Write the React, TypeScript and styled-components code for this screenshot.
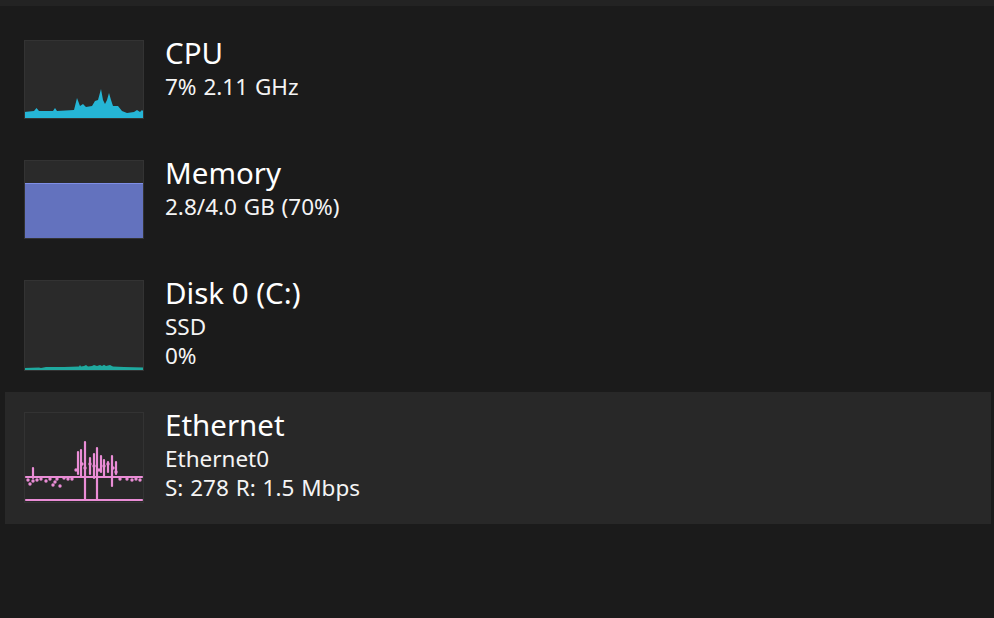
import React from 'react'
import styled, {createGlobalStyle} from 'styled-components'

const GlobalStyle = createGlobalStyle`
  html, body {
    margin: 0;
    padding: 0;
    background: #1b1b1b;
  }
  body {
    font-family: "Noto Sans", "Open Sans", sans-serif;
    color: #ffffff;
  }
`

type Kind = 'cpu' | 'memory' | 'disk' | 'ethernet'

type Resource = {
  name: string
  lines: string[]
  kind: Kind
  chartHeight: number
  selected?: boolean
}

const resources: Resource[] = [
  {name: 'CPU', lines: ['7% 2.11 GHz'], kind: 'cpu', chartHeight: 79},
  {name: 'Memory', lines: ['2.8/4.0 GB (70%)'], kind: 'memory', chartHeight: 79},
  {name: 'Disk 0 (C:)', lines: ['SSD', '0%'], kind: 'disk', chartHeight: 91},
  {
    name: 'Ethernet',
    lines: ['Ethernet0', 'S: 278 R: 1.5 Mbps'],
    kind: 'ethernet',
    chartHeight: 91,
    selected: true,
  },
]

const cpuPoints =
  '0,72 10,71 12.5,68 15,71 29,71 31,68 33,71 50,70 53,58 56,66 59,64 62,67 68,66 71,61 74,60 77,49 79,60 81,64 83,60 85,53 87,60 89,66 94,66 98,71 103,73 110,72 113,70 116,72 118,70 120,72 120,79 0,79'

const diskPoints =
  '0,88 15,87.5 17,88 22,87 40,87 55,86.5 56,85 57,86.5 60,86 62,85 64,86.5 68,86 70,85 73,86 76,85 78,86 80,84.8 82,86 86,85 89,86.5 100,87 120,87.5 120,91 0,91'

// spikes of the network trace: x, top, bottom
const netSpikes: [number, number, number][] = [
  [9, 56, 66],
  [54, 40, 62],
  [57, 38, 64],
  [61, 30, 87],
  [66, 46, 62],
  [70, 42, 66],
  [73, 36, 87],
  [77, 44, 60],
  [80, 48, 64],
  [84, 50, 60],
  [88, 44, 74],
  [92, 50, 62],
]

const netDots: [number, number][] = [
  [4, 68], [9, 69], [13, 68], [17, 67], [22, 69], [26, 67], [33, 67], [31, 70],
  [40, 66], [44, 67], [29, 73], [36, 74], [48, 67], [58, 52], [61, 56], [66, 52],
  [70, 54], [75, 58], [80, 54], [84, 52], [89, 56], [96, 67], [103, 67],
  [108, 68], [112, 67], [116, 68], [92, 60], [52, 58], [6, 72],
]

const Chart = ({kind, height}: {kind: Kind; height: number}) => {
  if (kind === 'memory') {
    return (
      <ChartBox $h={height} $framed>
        <svg width="120" height={height} viewBox={`0 0 120 ${height}`}>
          <rect x="0.5" y="23.5" width="119" height={height - 24} fill="#6372be" stroke="#7f8fe6" />
        </svg>
      </ChartBox>
    )
  }
  if (kind === 'cpu') {
    return (
      <ChartBox $h={height} $framed>
        <svg width="120" height={height} viewBox={`0 0 120 ${height}`}>
          <polygon points={cpuPoints} fill="#25b5d6" />
        </svg>
      </ChartBox>
    )
  }
  if (kind === 'disk') {
    return (
      <ChartBox $h={height} $framed>
        <svg width="120" height={height} viewBox={`0 0 120 ${height}`}>
          <polygon points={diskPoints} fill="#1fa99f" />
        </svg>
      </ChartBox>
    )
  }
  return (
    <ChartBox $h={height}>
      <svg width="120" height={height} viewBox={`0 0 120 ${height}`}>
        <g stroke="#ea8dd6" strokeWidth="2.2" strokeLinecap="round" fill="none">
          <line x1="2" y1="65" x2="118" y2="65" />
          <line x1="2" y1="88" x2="118" y2="88" />
          {netSpikes.map(([x, t, b], i) => (
            <line key={i} x1={x} y1={t} x2={x} y2={b} />
          ))}
        </g>
        <g fill="#ea8dd6">
          {netDots.map(([x, y], i) => (
            <circle key={i} cx={x} cy={y} r="1.7" />
          ))}
        </g>
      </svg>
    </ChartBox>
  )
}

const App = () => (
  <>
    <GlobalStyle />
    <Page>
      <TopStrip />
      <List>
        {resources.map((r) => (
          <Row key={r.name} $selected={!!r.selected}>
            <Chart kind={r.kind} height={r.chartHeight} />
            <Info>
              <Title>{r.name}</Title>
              {r.lines.map((l) => (
                <Detail key={l}>{l}</Detail>
              ))}
            </Info>
          </Row>
        ))}
      </List>
    </Page>
  </>
)

const Page = styled.div`
  width: 994px;
  height: 618px;
  background: #1b1b1b;
  overflow: hidden;
`
const TopStrip = styled.div`
  height: 6px;
  background: #232323;
`
const List = styled.div`
  display: flex;
  flex-direction: column;
  padding: 14px 3px 0 5px;
`
const Row = styled.div<{$selected: boolean}>`
  display: flex;
  align-items: flex-start;
  gap: 21px;
  padding: 20px 19px 21px;
  background: ${(p) => (p.$selected ? '#282828' : 'transparent')};
`
const ChartBox = styled.div<{$h: number; $framed?: boolean}>`
  width: 120px;
  height: ${(p) => p.$h}px;
  flex-shrink: 0;
  box-sizing: border-box;
  background: ${(p) => (p.$framed ? '#2a2a2a' : 'transparent')};
  outline: 1px solid #333333;
  outline-offset: -1px;
  svg {
    display: block;
  }
`
const Info = styled.div`
  display: flex;
  flex-direction: column;
  margin-top: -6px;
`
const Title = styled.div`
  font-size: 29.5px;
  line-height: 38px;
  color: #ffffff;
`
const Detail = styled.div`
  font-size: 22.5px;
  line-height: 29px;
  word-spacing: 1px;
  color: #f4f4f4;
`

export default App
